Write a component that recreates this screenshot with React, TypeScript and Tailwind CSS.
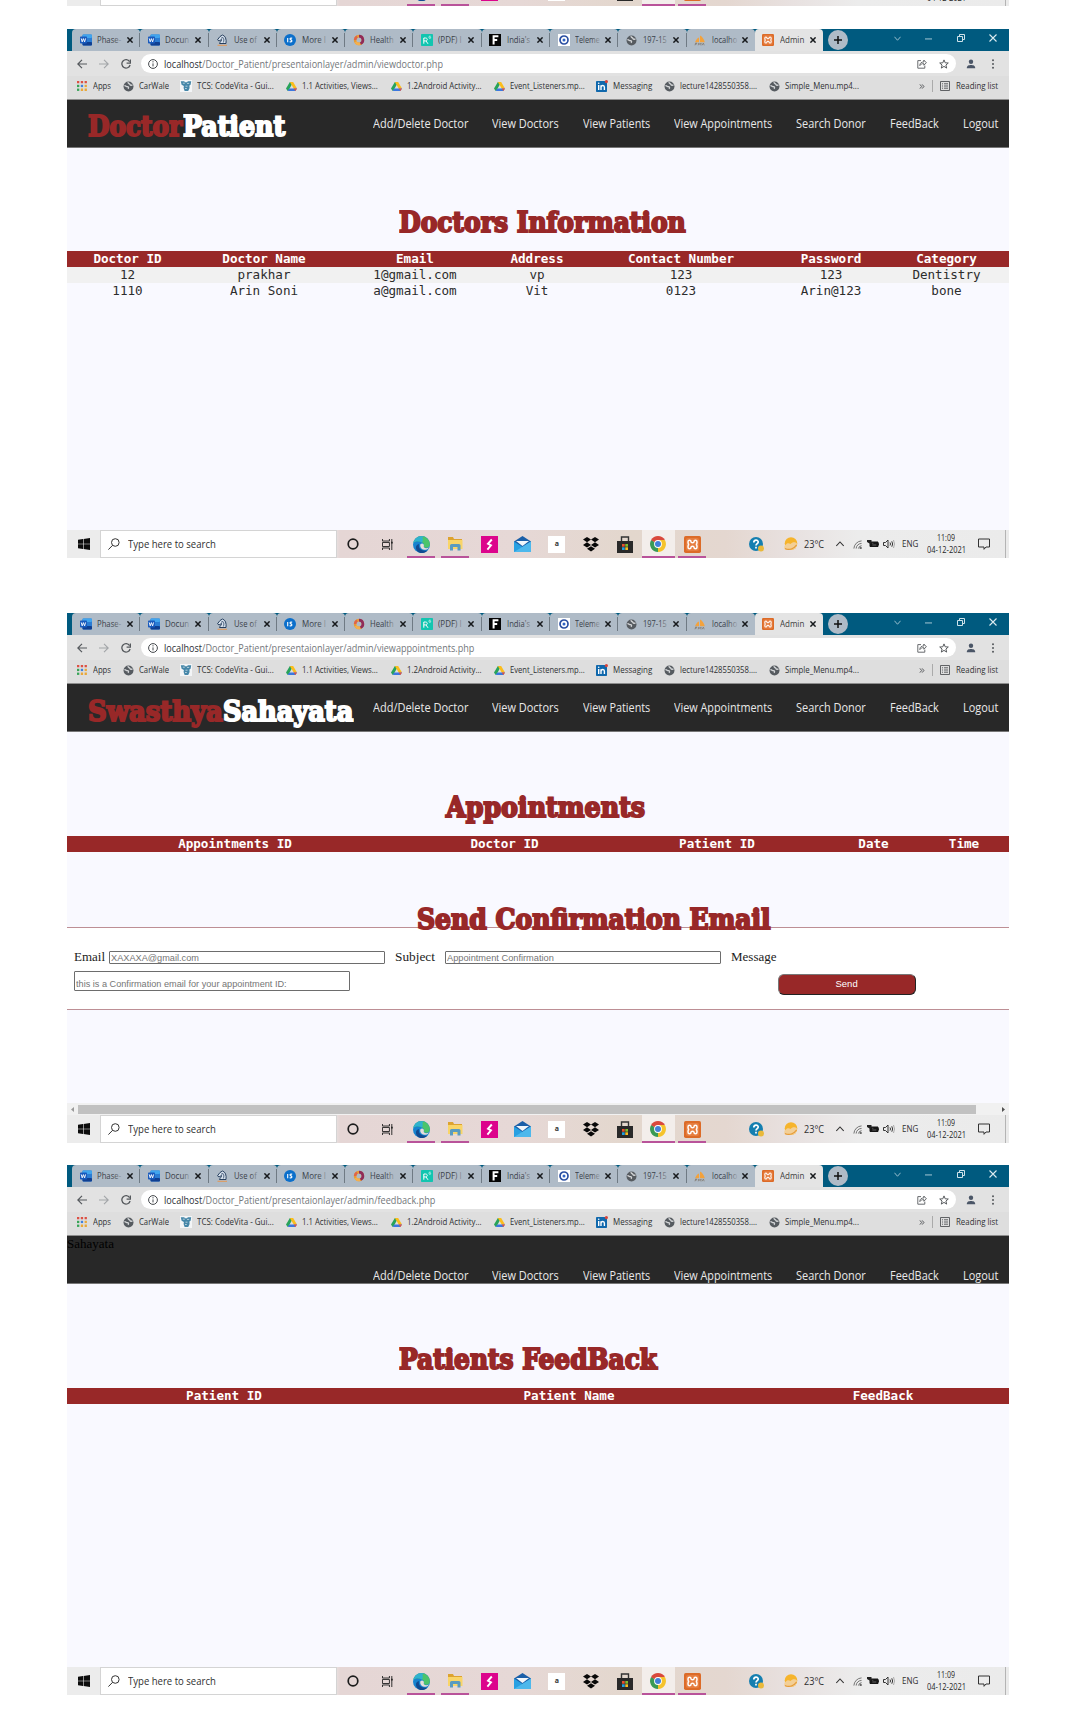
import { useLayoutEffect, useRef, useState, type ReactNode } from "react";

/* Text squeezed or stretched horizontally to the width of its box. */
function Fit({ className, children }: { className: string; children: ReactNode }) {
  const outer = useRef<HTMLSpanElement>(null);
  const inner = useRef<HTMLSpanElement>(null);
  const [scale, setScale] = useState(1);
  useLayoutEffect(() => {
    if (outer.current && inner.current && inner.current.offsetWidth) {
      setScale(outer.current.getBoundingClientRect().width / inner.current.offsetWidth);
    }
  }, []);
  return (
    <span ref={outer} className={`block shrink-0 whitespace-nowrap ${className}`}>
      <span ref={inner} className="inline-block origin-left align-top" style={{ transform: `scaleX(${scale})` }}>
        {children}
      </span>
    </span>
  );
}

const Word = () => (
  <svg viewBox="0 0 12 12" className="h-3 w-3">
    <rect x="2.5" y="0.5" width="9.5" height="11" rx="1" fill="#2b7cd3" />
    <rect x="2.5" y="0.5" width="9.5" height="3.5" rx="1" fill="#41a5ee" />
    <rect x="2.5" y="8" width="9.5" height="3.5" rx="1" fill="#103f91" />
    <rect x="0" y="2.6" width="7" height="7" rx="0.8" fill="#185abd" />
    <path d="M1.2 4.4l1 3.5 1.2-3.3 1.2 3.3 1-3.5" fill="none" stroke="#fff" strokeWidth="0.9" />
  </svg>
);
const Knight = () => (
  <svg viewBox="0 0 12 12" className="h-3 w-3">
    <path d="M3.5 9.5C4 7.5 6 7 5.5 5.5L3 7 1.5 5.8 4 2.5 6.5 1c3 1 4 4 3.5 8.5z" fill="#d8e2ee" stroke="#27405f" strokeWidth="1" />
    <path d="M5 4.2l2-.6M7 3.5c1.3 1.5 1 3.5.3 5" stroke="#27405f" strokeWidth="0.8" fill="none" />
    <path d="M1.5 11.3h9.5" stroke="#e09a5c" strokeWidth="1.1" />
  </svg>
);
const IsBadge = () => (
  <svg viewBox="0 0 12 12" className="h-3 w-3">
    <circle cx="6" cy="6" r="6" fill="#0b6fcb" />
    <path d="M3.7 3.9v4.4M8.2 4.3c-2.3-.8-2.8 1.1-1.3 1.6 1.7.5 1.2 2.4-1.3 1.9" stroke="#fff" strokeWidth="1.1" fill="none" />
  </svg>
);
const Ring = () => (
  <svg viewBox="0 0 12 12" className="h-3 w-3" fill="none" strokeWidth="2.6">
    <circle cx="6" cy="6" r="3.9" stroke="#e99a33" />
    <path d="M6 2.1a3.9 3.9 0 0 1 1.5 7.5" stroke="#8f2a5a" />
    <path d="M2.1 6a3.9 3.9 0 0 1 2-3.4" stroke="#e0644a" />
    <path d="M2.6 7.9A3.9 3.9 0 0 0 7 9.8" stroke="#f4b04d" />
  </svg>
);
const ResearchGate = () => (
  <svg viewBox="0 0 12 12" className="h-3 w-3">
    <rect width="12" height="12" rx="0.8" fill="#12c5b0" />
    <path d="M2.8 9.7V4h1.8c2.2 0 2.2 2.9 0 2.9H2.8M5 7l2 2.8" stroke="#fff" strokeWidth="1" fill="none" />
    <path d="M9.7 2.3c-1.3-.8-1.9.3-1.6 1.5.3 1 1.7.9 1.6-.5" stroke="#fff" strokeWidth="0.7" fill="none" />
  </svg>
);
const FMark = () => (
  <svg viewBox="0 0 12 12" className="h-3 w-3">
    <rect width="12" height="12" fill="#050505" />
    <path d="M4.6 10.5V2.3h4.8M4.6 6h3.6" stroke="#fff" strokeWidth="2" fill="none" />
  </svg>
);
const Telemed = () => (
  <svg viewBox="0 0 12 12" className="h-3 w-3">
    <rect width="12" height="12" fill="#fff" />
    <circle cx="6" cy="6" r="4" fill="none" stroke="#2b4fa2" strokeWidth="1.7" />
    <circle cx="6" cy="6" r="1.5" fill="#2f62c4" />
  </svg>
);
const Globe = () => (
  <svg viewBox="0 0 12 12" className="h-[11px] w-[11px]">
    <circle cx="6" cy="6" r="5.4" fill="#565b60" />
    <path d="M1.6 5.2c1.400-.4 2 1.200 3.200 1 1.400-.3 1.600 1.300.6 2.200M5.600 1.200c-.3 1.600 1.600 1.400 2 2.600.4 1.200 1.600.8 2.800.6" stroke="#d3d5d7" strokeWidth="1.500" fill="none" />
  </svg>
);
const Pma = () => (
  <svg viewBox="0 0 12 12" className="h-3 w-3">
    <path d="M1 8.2C2.2 5.5 3.5 4 5 3.4v4.8zM6 8.2V1.5c2.4 1 4 3.8 4.8 6.7z" fill="#f3a23c" />
    <path d="M1 11.3l.6-2.2h1.2l-.4 1.1H1.4M4.2 11.3l.6-2.2 1 1.4 1.3-1.4-.3 2.2M8 11.3l1.4-2.2.8 2.2" stroke="#7d7468" strokeWidth="0.7" fill="none" />
  </svg>
);
const Xampp = ({ className = "h-3 w-3" }: { className?: string }) => (
  <svg viewBox="0 0 16 16" className={className}>
    <rect width="16" height="16" rx="1.6" fill="#dc6b28" />
    <rect x="1.800" y="1.800" width="12.400" height="12.400" rx="2" fill="#e67e40" />
    <path d="M3.800 5.400Q3.800 4 5.200 4 6.600 4 6.600 5.400 6.600 6.400 8 6.400T9.400 5.400Q9.400 4 10.800 4 12.200 4 12.200 5.400V6.600Q12.200 8 11 8 12.200 8 12.200 9.400V10.600Q12.200 12 10.800 12 9.400 12 9.400 10.600 9.400 9.600 8 9.600T6.600 10.600Q6.600 12 5.200 12 3.800 12 3.800 10.600V9.400Q3.800 8 5 8 3.800 8 3.800 6.600z" stroke="#fff" strokeWidth="1.400" fill="none" />
  </svg>
);
const Drive = () => (
  <svg viewBox="0 0 12 12" className="h-[11px] w-[11px]">
    <path d="M4.2 1h3.6L3.2 9.5 1.8 11 0 8.2z" fill="#28a35a" />
    <path d="M4.2 1h3.6L12 8.2H8.4z" fill="#fbbd1c" />
    <path d="M3.6 8.2H12L10.2 11H1.8z" fill="#3c78e0" />
    <path d="M12 8.2L10.2 11 8.4 8.2z" fill="#e4513c" />
  </svg>
);
const Tcs = () => (
  <svg viewBox="0 0 12 12" className="h-3 w-3">
    <rect width="12" height="12" fill="#f3f5f7" />
    <path d="M.8 1.300h3.400l.8.9h2l.9-.9h3.300l-.6 3.400-1.200.9.2 2.400-1.400 3H4.600L3.600 8l.3-2L1.600 4.800z" fill="#4586a8" />
    <path d="M2.8 3.2h2M7 3.4h2.2M5.5 6.2h2M5 8.5h1.8" stroke="#cfe2ea" strokeWidth="0.8" />
  </svg>
);
const LinkedIn = () => (
  <svg viewBox="0 0 12 12" className="h-3 w-3">
    <rect y="1" width="11" height="11" rx="0.8" fill="#1068ac" />
    <path d="M2.7 5v5M5 10V5.2M5 7.2C5.3 5 8.4 5 8.4 7.3V10" stroke="#fff" strokeWidth="1.4" fill="none" />
    <circle cx="2.7" cy="3.2" r="0.8" fill="#fff" />
    <circle cx="10.4" cy="1.6" r="1.6" fill="#d5453c" />
  </svg>
);
const AppsGrid = () => (
  <svg viewBox="0 0 10 10" className="h-[10px] w-[10px]">
    <path d="M0 0h2.3v2.3H0zM3.8 0h2.3v2.3H3.8zM7.6 0h2.3v2.3H7.6z" fill="#dc5044" />
    <path d="M0 3.8h2.3v2.3H0z" fill="#38a457" />
    <path d="M3.8 3.8h2.3v2.3H3.8z" fill="#4080dc" />
    <path d="M7.6 3.8h2.3v2.3H7.6z" fill="#e9a83a" />
    <path d="M0 7.6h2.3v2.3H0z" fill="#38a457" />
    <path d="M3.8 7.6h2.3v2.3H3.8zM7.6 7.6h2.3v2.3H7.6z" fill="#e9a83a" />
  </svg>
);

const tabs: { icon: ReactNode; label: string; width: string }[] = [
  { icon: <Word />, label: "Phase-", width: "w-[24px]" },
  { icon: <Word />, label: "Docun", width: "w-[24px]" },
  { icon: <Knight />, label: "Use of", width: "w-[23px]" },
  { icon: <IsBadge />, label: "More I", width: "w-[24px]" },
  { icon: <Ring />, label: "Health", width: "w-[24px]" },
  { icon: <ResearchGate />, label: "(PDF) I", width: "w-[24px]" },
  { icon: <FMark />, label: "India's", width: "w-[23px]" },
  { icon: <Telemed />, label: "Teleme", width: "w-[25px]" },
  { icon: <Globe />, label: "197-15", width: "w-[24px]" },
  { icon: <Pma />, label: "localho", width: "w-[25px]" },
  { icon: <Xampp />, label: "Admin", width: "w-[24px]" },
];

function TabStrip() {
  return (
    <div className="flex h-[22px] items-stretch bg-[#005a7f] pl-[5px]">
      {tabs.map((t, i) => {
        const active = i === tabs.length - 1;
        return (
          <div
            key={i}
            className={`relative flex w-[68.3px] shrink-0 items-center rounded-t-[4px] ${active ? "bg-[#e4e4e4]" : "bg-[#afbbc7]"}`}
          >
            <span className="ml-[7.500px] flex w-3 shrink-0 justify-center">{t.icon}</span>
            <Fit className={`ml-[5.500px] text-[9px] leading-3 ${t.width} ${active ? "text-[#3c3c3c]" : "text-[#3a4149]"}`}>{t.label}</Fit>
            {!active && <span className="absolute top-1 left-[41px] h-4 w-[11px] bg-linear-to-r from-transparent to-[#afbbc7]" />}
            <svg viewBox="0 0 6 6" className="absolute left-[55px] h-[6px] w-[6px]" stroke="#16191c" strokeWidth="1.5">
              <path d="M0.4 0.4l5.2 5.2M5.6 0.4L0.4 5.6" />
            </svg>
            {i < tabs.length - 2 && <span className="absolute top-[4px] right-0 h-[14px] w-px bg-[#6f7a84]" />}
          </div>
        );
      })}
      <div className="ml-[5px] flex h-[20px] w-[20px] items-center justify-center self-center rounded-full bg-[#afbbc7]">
        <svg viewBox="0 0 8 8" className="h-2 w-2" stroke="#111" strokeWidth="1.5">
          <path d="M4 0v8M0 4h8" />
        </svg>
      </div>
      <div className="ml-auto flex items-center gap-[24.5px] pr-[12px] pb-[4px]">
        <svg viewBox="0 0 8 8" className="h-[7px] w-[7px]" fill="none" stroke="#a9c9d6"><path d="M0.5 2L4 6l3.5-4" /></svg>
        <svg viewBox="0 0 8 8" className="h-[7px] w-[7px]" fill="none" stroke="#bcd6e0"><path d="M0 4.5h8" /></svg>
        <svg viewBox="0 0 8 8" className="h-2 w-2" fill="none" stroke="#cfe2ea"><path d="M0.5 2.5h5v5h-5zM2.5 2.5v-2h5v5h-2" /></svg>
        <svg viewBox="0 0 8 8" className="h-2 w-2" fill="none" stroke="#dcebf0" strokeWidth="1.1"><path d="M0.5 0.5l7 7M7.5 0.5l-7 7" /></svg>
      </div>
    </div>
  );
}

function AddressBar({ page, width }: { page: string; width: string }) {
  return (
    <div className="flex h-[25px] items-center bg-[#e2e2e2]">
      <svg viewBox="0 0 10 10" className="ml-[10px] h-[10px] w-[10px]" fill="none" stroke="#54585c" strokeWidth="1.2"><path d="M10 5H1M5 0.8L0.8 5 5 9.2" /></svg>
      <svg viewBox="0 0 10 10" className="ml-[12px] h-[10px] w-[10px]" fill="none" stroke="#a2a5a8" strokeWidth="1.1"><path d="M0 5h9M5 0.8L9.2 5 5 9.2" /></svg>
      <svg viewBox="0 0 10 10" className="ml-[12px] h-[10px] w-[10px]" fill="none" stroke="#54585c" strokeWidth="1.3"><path d="M8.6 2.6A4.2 4.2 0 1 0 9.1 6" /><path d="M9.4 0.4v3.8H5.6" /></svg>
      <div className="ml-[10px] flex h-[19px] w-[815px] items-center rounded-full bg-white">
        <svg viewBox="0 0 10 10" className="ml-[7px] h-[10px] w-[10px]" fill="none" stroke="#44484c"><circle cx="5" cy="5" r="4.4" /><path d="M5 4.4v3M5 2.2v1.2" /></svg>
        <Fit className={`ml-[6px] text-[10.5px] leading-4 text-[#73777b] ${width}`}>
          <span className="text-[#2b3035]">localhost</span>/Doctor_Patient/presentaionlayer/admin/{page}
        </Fit>
        <svg viewBox="0 0 10 10" className="ml-auto h-[10px] w-[10px]" fill="none" stroke="#686b6e"><path d="M4 1.6H0.8v7.6h7V6.6M2.8 6.6c0-3 2-3.6 4-3.6V1l2.6 2.8L6.8 6.2V4.6c-2 0-3 .6-4 2z" /></svg>
        <svg viewBox="0 0 10 10" className="mr-[7px] ml-[12px] h-[10px] w-[10px]" fill="none" stroke="#595c5f"><path d="M5 0.9l1.2 2.9 3.1.2-2.4 2 .8 3.1L5 7.4 2.3 9.1l.8-3.1L.7 4l3.1-.2z" /></svg>
      </div>
      <svg viewBox="0 0 10 10" className="ml-[10px] h-[10px] w-[10px]" fill="#4b5667"><circle cx="5" cy="2.8" r="2.2" /><path d="M0.8 9.2C.8 6.6 3 6 5 6s4.2.6 4.2 3.2z" /></svg>
      <svg viewBox="0 0 4 10" className="ml-[15px] h-[10px] w-[4px]" fill="#55595d"><circle cx="2" cy="1.2" r="1" /><circle cx="2" cy="5" r="1" /><circle cx="2" cy="8.8" r="1" /></svg>
    </div>
  );
}

const bookmarks: { icon: ReactNode; label: string; cls: string; gap: string }[] = [
  { icon: <AppsGrid />, label: "Apps", cls: "w-[18px]", gap: "ml-[9px]" },
  { icon: <Globe />, label: "CarWale", cls: "w-[30px]", gap: "ml-[11px]" },
  { icon: <Tcs />, label: "TCS: CodeVita - Gui...", cls: "w-[77px]", gap: "ml-[11px]" },
  { icon: <Drive />, label: "1.1 Activities, Views...", cls: "w-[76px]", gap: "ml-[11px]" },
  { icon: <Drive />, label: "1.2Android Activity...", cls: "w-[75px]", gap: "ml-[12px]" },
  { icon: <Drive />, label: "Event_Listeners.mp...", cls: "w-[75px]", gap: "ml-[11px]" },
  { icon: <LinkedIn />, label: "Messaging", cls: "w-[39px]", gap: "ml-[11px]" },
  { icon: <Globe />, label: "lecture1428550358....", cls: "w-[77px]", gap: "ml-[11px]" },
  { icon: <Globe />, label: "Simple_Menu.mp4...", cls: "w-[74px]", gap: "ml-[11px]" },
];

function BookmarkBar() {
  return (
    <div className="flex h-[23.500px] items-center border-b border-[#8d8d8d] bg-[#dedede] pb-[2px] text-[9px] leading-3 text-[#2f3133]">
      {bookmarks.map((b, i) => (
        <div key={i} className={`flex shrink-0 items-center ${b.gap}`}>
          <span className="flex w-3 justify-center">{b.icon}</span>
          <Fit className={`ml-[5px] ${b.cls}`}>{b.label}</Fit>
        </div>
      ))}
      <svg viewBox="0 0 6 6" className="ml-auto h-[5px] w-[6px]" fill="none" stroke="#3c3f42"><path d="M0.5 0.5L2.6 3 .5 5.5M3.2 0.5L5.3 3 3.2 5.5" /></svg>
      <span className="ml-[7px] h-3 w-px bg-[#aaaaaa]" />
      <svg viewBox="0 0 10 10" className="ml-[7px] h-[10px] w-[10px]" fill="none" stroke="#515457" strokeWidth="0.9"><path d="M0.5 0.5h9v9h-9zM4 2.8h4M4 5h4M4 7.2h4M2 2.8h1M2 5h1M2 7.2h1" /></svg>
      <Fit className="mr-[11px] ml-[6px] w-[42px]">Reading list</Fit>
    </div>
  );
}

const display = "font-[DejaVu_Serif,serif] font-bold text-[27px] leading-8 [-webkit-text-stroke:2px_currentColor]";

function SiteNav({ brand, low }: { brand: ReactNode; low?: boolean }) {
  return (
    <div className="relative flex h-[48px] justify-end border-b border-[#777] bg-[#282828]">
      {brand}
      <div className={`flex gap-[24px] pr-[11px] text-[12.5px] leading-4 text-[#e9e9e9] ${low ? "pt-[32px]" : "pt-[16px]"}`}>
        <Fit className="w-[95px]">Add/Delete Doctor</Fit>
        <Fit className="w-[66.5px]">View Doctors</Fit>
        <Fit className="w-[67.5px]">View Patients</Fit>
        <Fit className="w-[98px]">View Appointments</Fit>
        <Fit className="w-[70px]">Search Donor</Fit>
        <Fit className="w-[49px]">FeedBack</Fit>
        <Fit className="w-[35px]">Logout</Fit>
      </div>
    </div>
  );
}

function Table({ cols, head, rows = [] }: { cols: string; head: string[]; rows?: string[][] }) {
  return (
    <div className="font-[DejaVu_Sans_Mono,monospace] text-[12.6px] leading-4">
      <div className={`grid h-4 bg-[#982828] text-center font-bold text-white ${cols}`}>
        {head.map((h) => <span key={h} className="whitespace-nowrap">{h}</span>)}
      </div>
      {rows.map((r, i) => (
        <div key={i} className={`grid h-4 text-center text-[#2c2c2c] ${cols} ${i % 2 ? "" : "bg-[#f1f1f1]"}`}>
          {r.map((c, j) => <span key={j}>{c}</span>)}
        </div>
      ))}
    </div>
  );
}

const underline = "border-b-2 border-[#b9539a]";

function Taskbar() {
  const cell = "flex w-[33.9px] shrink-0 items-center justify-center";
  return (
    <div className="flex h-[28px] shrink-0 items-stretch bg-[linear-gradient(90deg,#ececec_0,#ececec_28%,#e5d6d5_29%,#e6d8d6_48%,#e3d7cd_60%,#e4d7d0_70%,#e8e1e0_77%,#ececec_84%,#ebebeb_100%)] text-[#303030]">
      <div className="flex w-[33px] items-center justify-center">
        <svg viewBox="0 0 12 12" className="h-3 w-3" fill="#0c0c0c"><path d="M0 1.8l5-.7v4.6H0zM5.6 1L12 0v5.7H5.6zM0 6.3h5v4.6l-5-.7zM5.6 6.3H12V12l-6.4-1z" /></svg>
      </div>
      <div className="flex w-[236.500px] items-center border border-[#d4d4d4] bg-white">
        <svg viewBox="0 0 12 12" className="ml-[7px] h-3 w-3" fill="none" stroke="#333"><circle cx="7.3" cy="4.5" r="3.8" /><path d="M4.6 7.3L0.4 11.6" /></svg>
        <Fit className="ml-[7.500px] w-[88px] text-[11.5px] leading-4">Type here to search</Fit>
      </div>
      <div className={cell}><svg viewBox="0 0 12 12" className="h-3 w-3" fill="none" stroke="#1c1c1c" strokeWidth="1.7"><circle cx="6" cy="6" r="4.8" /></svg></div>
      <div className={cell}><svg viewBox="0 0 12 12" className="h-[11px] w-[11px]" fill="none" stroke="#222"><path d="M0.5 0v2.2h7.600V0M0.5 12V9.8h7.600V12M0.5 3.8h7.600v4.4H0.5zM10.7 0v12" /><path d="M9.900 4h1.800" strokeWidth="2" /></svg></div>
      <div className={`${cell} relative`}>
        <svg viewBox="0 0 17 17" className="h-[17px] w-[17px]">
          <circle cx="8.5" cy="8.5" r="8.5" fill="#1683cf" />
          <path d="M0.3 7C1.6 1.6 6.5-.8 11 .6c4.500 1.500 7 6.500 5.400 9.600-1.200 2-4.600 2-6 .9.800-1.500.8-3.500-1.200-4.600C6 4.800 2 5 .3 7z" fill="#4bc46b" />
          <path d="M.3 7C1.600 1.600 6.500-.8 11 .6 8 1 11 4 9 6.400 6 4.800 2 5 .3 7z" fill="#2fb2cf" />
          <path d="M6 8c-1 4.500 2.500 7.600 8.600 6.400C11 18.500 4 18 3 12.500 2.600 10 4 8.500 6 8z" fill="#124a90" />
          <path d="M7.500 8c2-1.500 4 .3 3.300 2.300-.5 1.500 2 2.600 5.200 1.200-1.500 2.800-5.500 2.800-7.300 1.200C7.300 11.500 6.800 9.600 7.500 8z" fill="#e6ddda" />
        </svg>
        <span className={`absolute inset-x-[3px] bottom-0 ${underline}`} />
      </div>
      <div className={`${cell} relative`}>
        <svg viewBox="0 0 16 14" className="h-[14px] w-4">
          <path d="M1 0h5l1 2h8v3H1z" fill="#dda32f" /><path d="M1 3h14.500v9H1z" fill="#f9d568" /><path d="M3 13.500V8.500Q3 7 4.500 7h7.500q1.500 0 1.500 1.500v5h-3V10H6v3.500z" fill="#5a9bc0" />
        </svg>
        <span className={`absolute inset-x-[3px] bottom-0 ${underline}`} />
      </div>
      <div className={cell}><svg viewBox="0 0 17 17" className="h-[17px] w-[17px]"><rect width="17" height="17" fill="#dc048c" /><path d="M10.800 3.500L7 7.800l3 1.600-3.600 4.200" stroke="#fff" strokeWidth="1.900" fill="none" /></svg></div>
      <div className={cell}><svg viewBox="0 0 17 16" className="h-4 w-[17px]"><path d="M8.500 0L17 5.500V16H0V5.500z" fill="#1b5fa8" /><path d="M2 5h13l-6.500 5z" fill="#f2f7fb" /><path d="M0 5.500l8.500 5.500L17 5.500V16H0z" fill="#28a0e2" /><path d="M0 16l17-10.500V16z" fill="#4db8ec" /></svg></div>
      <div className={cell}><span className="flex h-[17px] w-[17px] items-center justify-center bg-white text-[7px] font-bold text-[#333]">a</span></div>
      <div className={cell}><svg viewBox="0 0 16 15" className="h-[15px] w-4" fill="#080808"><path d="M4 0l4 2.600-4 2.600-4-2.600zM12 0l4 2.600-4 2.600-4-2.600zM4 5.300l4 2.600-4 2.600L0 7.900zM12 5.300l4 2.600-4 2.600-4-2.600zM8 9.200l4 2.600L8 14.600l-4-2.800z" /></svg></div>
      <div className={cell}><svg viewBox="0 0 16 17" className="h-[17px] w-4"><path d="M4.500 6V1h7v5" stroke="#333" strokeWidth="1.400" fill="none" /><path d="M0 5h16v12H0z" fill="#292929" /><path d="M5 8h2.700v2.700H5z" fill="#e8502d" /><path d="M8.300 8H11v2.700H8.300z" fill="#7fbb2e" /><path d="M5 11.300h2.700V14H5z" fill="#1fa0e0" /><path d="M8.300 11.300H11V14H8.300z" fill="#f8bc1f" /></svg></div>
      <div className={`${cell} bg-[#f3eeeb] ${underline}`}>
        <svg viewBox="0 0 16 16" className="mt-[2px] h-4 w-4">
          <path d="M8 8L1.100 4A8 8 0 0 1 14.900 4z" fill="#d9493c" /><path d="M8 8L14.900 4A8 8 0 0 1 8 16z" fill="#f5c32c" /><path d="M8 8v8A8 8 0 0 1 1.100 4z" fill="#3a9a55" />
          <path d="M8 4h6.900L11 10z" fill="#f5c32c" /><path d="M1.100 4L8 4v4z" fill="#d9493c" /><circle cx="8" cy="8" r="3.900" fill="#fff" /><circle cx="8" cy="8" r="3" fill="#4280d8" />
        </svg>
      </div>
      <div className={`${cell} relative`}><Xampp className="h-[17px] w-[17px]" /><span className={`absolute inset-x-[3px] bottom-0 ${underline}`} /></div>
      <div className="ml-[40px] flex flex-1 items-center">
        <svg viewBox="0 0 15 15" className="h-[15px] w-[15px]"><circle cx="7" cy="7" r="7" fill="#157fb0" /><path d="M4.800 5.500C4.800 2.500 9.200 2.500 9.200 5 9.200 6.700 7 6.500 7 8.600M7 9.800v1.800" stroke="#fff" strokeWidth="1.700" fill="none" /><circle cx="12" cy="11.500" r="3" fill="#e9b93a" /></svg>
        <svg viewBox="0 0 15 14" className="ml-[19px] h-[14px] w-[15px]"><circle cx="8" cy="6.500" r="6.300" fill="#f6b42c" /><path d="M3 13a3 3 0 0 1 0-5.500c1-1.500 3-1.500 4.500-.5 2-2.500 5-2 6.500-.5L12.500 12z" fill="#f3cf96" /><path d="M2 11.500C6 13.500 11 12 13.500 8" stroke="#e59a38" strokeWidth="1.200" fill="none" /></svg>
        <Fit className="ml-[6px] w-[20px] text-[10.500px] leading-4">23°C</Fit>
        <svg viewBox="0 0 8 8" className="ml-[12px] h-2 w-2" fill="none" stroke="#333" strokeWidth="1.100"><path d="M0.300 6L4 2l3.700 4" /></svg>
        <svg viewBox="0 0 10 10" className="ml-[8.500px] h-[9px] w-[9px]" fill="none" stroke="#666"><path d="M1 9.500A9 9 0 0 1 9.500 1M3.500 9.500A6 6 0 0 1 9.500 3.800M6 9.500a4 4 0 0 1 3.500-3.200" /><circle cx="8.500" cy="8.900" r="0.900" fill="#333" /></svg>
        <svg viewBox="0 0 12 8" className="ml-[5px] h-2 w-3"><path d="M3 2h8v4.500H3z" fill="#161616" stroke="#161616" /><path d="M0 0h4.500v3.500H2.500L0 2zM11 3.200h1v2h-1z" fill="#222" /><path d="M5.300 3.300h1M5.300 5h4" stroke="#999" strokeWidth="0.600" /></svg>
        <svg viewBox="0 0 12 10" className="ml-[4px] h-[10px] w-3" fill="none" stroke="#333"><path d="M0.500 3.500H2.500L5 1v8L2.500 6.500h-2zM7 3.500q1 1.500 0 3M8.800 2.300q1.600 2.700 0 5.400" /><path d="M10.500 1q2 4 0 8" stroke="#aaa" /></svg>
        <Fit className="ml-[7px] w-[16px] text-[9px] leading-3">ENG</Fit>
        <div className="ml-[8.500px] flex w-[40px] flex-col items-center text-[9px] leading-3 text-[#252525]">
          <Fit className="w-[18px]">11:09</Fit>
          <Fit className="w-[39px]">04-12-2021</Fit>
        </div>
        <svg viewBox="0 0 12 12" className="ml-[12px] h-3 w-3" fill="none" stroke="#333"><path d="M0.500 1h11v8H8L6 11.300V9H0.500z" /></svg>
      </div>
      <span className="mr-[3px] w-px bg-[#b4b4b4]" />
    </div>
  );
}

function BrowserWindow({ page, urlWidth, nav, children, foot, height }: { page: string; urlWidth: string; nav: ReactNode; children: ReactNode; foot?: ReactNode; height: string }) {
  return (
    <section className={`flex w-[942px] shrink-0 flex-col overflow-hidden bg-[#f9f9ff] ${height}`}>
      <TabStrip />
      <AddressBar page={page} width={urlWidth} />
      <BookmarkBar />
      {nav}
      <div className="min-h-0 flex-1">{children}</div>
      {foot}
      <Taskbar />
    </section>
  );
}

const Heading = ({ className, children }: { className: string; children: string }) => (
  <h1 className={`text-[#982828] ${display}`}><Fit className={className}>{children}</Fit></h1>
);

const field = "block w-[276px] rounded-[1px] border border-[#6d6d6d] bg-white px-[1px] font-[Liberation_Sans,sans-serif] text-[9.500px] text-[#757575]";

export default function App() {
  return (
    <main className="h-[1713px] w-[1080px] overflow-hidden bg-white pl-[67px] font-[Open_Sans,sans-serif]">
      <div className="flex h-[6px] w-[942px] flex-col justify-end overflow-hidden"><Taskbar /></div>
      <div className="h-[23px]" />
      <BrowserWindow
        page="viewdoctor.php"
        height="h-[529px]"
        urlWidth="w-[279px]"
        nav={<SiteNav brand={
          <div className={`mr-auto ml-[21px] flex pt-[11px] ${display}`}>
            <Fit className="w-[94.500px] text-[#982828]">Doctor</Fit><Fit className="w-[102px] text-white">Patient</Fit>
          </div>
        } />}
      >
        <div className="h-[59.500px]" />
        <Heading className="ml-[331.500px] w-[287px]">Doctors Information</Heading>
        <div className="h-[12px]" />
        <Table
          cols="grid-cols-[121px_152px_150px_94px_194px_106px_125px]"
          head={["Doctor ID", "Doctor Name", "Email", "Address", "Contact Number", "Password", "Category"]}
          rows={[
            ["12", "prakhar", "1@gmail.com", "vp", "123", "123", "Dentistry"],
            ["1110", "Arin Soni", "a@gmail.com", "Vit", "0123", "Arin@123", "bone"],
          ]}
        />
      </BrowserWindow>
      <div className="h-[55px]" />
      <BrowserWindow
        page="viewappointments.php"
        height="h-[530px]"
        urlWidth="w-[310px]"
        nav={<SiteNav brand={
          <div className={`mr-auto ml-[21px] flex pt-[12px] ${display}`}>
            <Fit className="w-[135px] text-[#982828]">Swasthya</Fit><Fit className="w-[130px] text-white">Sahayata</Fit>
          </div>
        } />}
        foot={
          <div className="flex h-[12px] items-center justify-between bg-[#f1f1f1] px-[4px]">
            <svg viewBox="0 0 3 5" className="h-[5px] w-[3px]" fill="#999"><path d="M3 0v5L0 2.500z" /></svg>
            <div className="mr-[26px] ml-[4px] h-[9px] flex-1 bg-[#c1c1c1]" />
            <svg viewBox="0 0 3 5" className="h-[5px] w-[3px]" fill="#505050"><path d="M0 0v5l3-2.500z" /></svg>
          </div>
        }
      >
        <div className="h-[60.500px]" />
        <Heading className="ml-[379px] w-[199px]">Appointments</Heading>
        <div className="h-[12px]" />
        <Table cols="grid-cols-[336px_203px_222px_91px_90px]" head={["Appointments ID", "Doctor ID", "Patient ID", "Date", "Time"]} />
        <div className="mt-[75px] h-[83px] border-y border-[#bd8f95] bg-white font-[Liberation_Serif,serif] text-[13px] leading-4 text-[#1c1c1c]">
          <div className="-mt-[24px] mb-[13px]"><Heading className="ml-[350px] w-[354px]">Send Confirmation Email</Heading></div>
          <div className="flex items-center pl-[7px]">
            <Fit className="w-[31px]">Email</Fit>
            <div className={`ml-[4px] h-[13px] leading-3 ${field}`}><Fit className="w-[88px]">XAXAXA@gmail.com</Fit></div>
            <Fit className="ml-[10px] w-[40px]">Subject</Fit>
            <div className={`ml-[10px] h-[13px] leading-3 ${field}`}><Fit className="w-[107px]">Appointment Confirmation</Fit></div>
            <Fit className="ml-[10px] w-[46px]">Message</Fit>
          </div>
          <div className="mt-[6px] flex items-start pl-[7px]">
            <div className={`h-[20px] pt-[6px] leading-3 ${field}`}><Fit className="w-[211px]">this is a Confirmation email for your appointment ID:</Fit></div>
            <button className="mt-[3px] ml-[427.500px] flex h-[21px] w-[138px] items-center justify-center rounded-[6px] border-[1.500px] border-t-[#777] border-r-[#222] border-b-[#222] border-l-[#777] bg-[#982828] pb-px font-[Liberation_Sans,sans-serif] text-[9.500px] leading-3 text-white">
              <Fit className="w-[22px]">Send</Fit>
            </button>
          </div>
        </div>
      </BrowserWindow>
      <div className="h-[22px]" />
      <BrowserWindow
        page="feedback.php"
        height="h-[530px]"
        urlWidth="w-[271px]"
        nav={<SiteNav low brand={<Fit className="mr-auto w-[47px] font-[Liberation_Serif,serif] text-[13px] leading-4 text-black">Sahayata</Fit>} />}
      >
        <div className="h-[60.500px]" />
        <Heading className="ml-[331.500px] w-[258px]">Patients FeedBack</Heading>
        <div className="h-[12px]" />
        <Table cols="grid-cols-[314px_376px_252px]" head={["Patient ID", "Patient Name", "FeedBack"]} />
      </BrowserWindow>
    </main>
  );
}
